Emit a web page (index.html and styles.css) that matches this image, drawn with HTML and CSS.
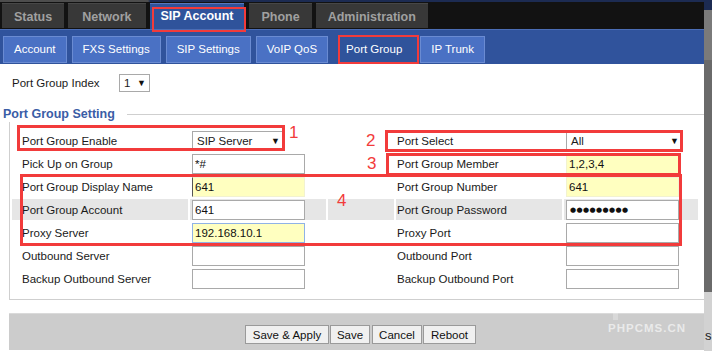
FILE: index.html
```html
<!DOCTYPE html>
<html lang="en">
<head>
    <meta charset="UTF-8">
    <title>Port Group</title>
    <link rel="stylesheet" href="styles.css">
</head>
<body>
<div class="screen">
    <div class="page">
        <div class="topstrip"></div>
        <nav class="mainnav">
            <span class="tab">Status</span>
            <span class="tab tab-wide">Network</span>
            <span class="tab active">SIP Account</span>
            <span class="tab">Phone</span>
            <span class="tab">Administration</span>
        </nav>
        <div class="subnav">
            <span class="subtab">Account</span>
            <span class="subtab">FXS Settings</span>
            <span class="subtab">SIP Settings</span>
            <span class="subtab">VoIP QoS</span>
            <span class="subtab active">Port Group</span>
            <span class="subtab">IP Trunk</span>
        </div>

        <div class="content">
            <div class="index-row">
                <span class="index-label">Port Group Index</span>
                <div class="select select-index"><span>1</span><span class="arrow">&#9660;</span></div>
            </div>

            <div class="legend-row">
                <span class="legend">Port Group Setting</span>
                <span class="legend-line"></span>
            </div>

            <div class="fieldbox">
                <div class="grid">
                    <div class="cell lab1">Port Group Enable</div>
                    <div class="cell"><div class="select select-enable"><span>SIP Server</span><span class="arrow">&#9660;</span></div></div>
                    <div class="cell"></div>
                    <div class="cell lab2">Port Select</div>
                    <div class="cell"><div class="select select-port"><span>All</span><span class="arrow">&#9660;</span></div></div>

                    <div class="cell lab1">Pick Up on Group</div>
                    <div class="cell"><input class="field" value="*#"></div>
                    <div class="cell"></div>
                    <div class="cell lab2">Port Group Member</div>
                    <div class="cell"><input class="field field-yellow" value="1,2,3,4"></div>

                    <div class="cell lab1">Port Group Display Name</div>
                    <div class="cell"><input class="field field-yellow field-caret" value="641"></div>
                    <div class="cell"></div>
                    <div class="cell lab2">Port Group Number</div>
                    <div class="cell"><input class="field field-yellow" value="641"></div>

                    <div class="cell shade lab1">Port Group Account</div>
                    <div class="cell shade"><input class="field" value="641"></div>
                    <div class="cell shade"></div>
                    <div class="cell shade lab2">Port Group Password</div>
                    <div class="cell shade"><div class="field dots">&#9679;&#9679;&#9679;&#9679;&#9679;&#9679;&#9679;&#9679;&#9679;</div></div>

                    <div class="cell lab1">Proxy Server</div>
                    <div class="cell"><input class="field field-yellow field-focus" value="192.168.10.1"></div>
                    <div class="cell"></div>
                    <div class="cell lab2">Proxy Port</div>
                    <div class="cell"><input class="field" value=""></div>

                    <div class="cell lab1">Outbound Server</div>
                    <div class="cell"><input class="field" value=""></div>
                    <div class="cell"></div>
                    <div class="cell lab2">Outbound Port</div>
                    <div class="cell"><input class="field" value=""></div>

                    <div class="cell lab1">Backup Outbound Server</div>
                    <div class="cell"><input class="field" value=""></div>
                    <div class="cell"></div>
                    <div class="cell lab2">Backup Outbound Port</div>
                    <div class="cell"><input class="field" value=""></div>
                </div>
            </div>

            <div class="actions">
                <button class="btn btn-apply">Save &amp; Apply</button>
                <button class="btn btn-save">Save</button>
                <button class="btn btn-cancel">Cancel</button>
                <button class="btn btn-reboot">Reboot</button>
                <span class="watermark-logo"></span>
                <span class="watermark">PHPCMS.CN</span>
            </div>
        </div>

        <!-- red marks drawn over the screenshot -->
        <div class="mark mark-tab"></div>
        <div class="mark mark-subtab"></div>
        <div class="mark mark-1"></div>
        <div class="mark mark-2"></div>
        <div class="mark mark-3"></div>
        <div class="mark mark-4"></div>
        <span class="num num-1">1</span>
        <span class="num num-2">2</span>
        <span class="num num-3">3</span>
        <span class="num num-4">4</span>
    </div>
    <div class="side">
        <div class="side-top"></div>
        <div class="side-light"></div>
        <div class="side-mid"></div>
        <div class="side-low">s</div>
    </div>
</div>
</body>
</html>
```

FILE: styles.css
```css
body {
    margin: 0;
    font-family: "Liberation Sans", Arial, sans-serif;
    font-size: 11.5px;
    color: #1a1a1a;
    background-color: #6a6a6a;
}

.screen {
    display: flex;
    width: 712px;
    height: 351px;
    overflow: hidden;
    position: relative;
}

.page {
    width: 704px;
    flex: none;
    background-color: white;
}

.topstrip {
    height: 2px;
    background: linear-gradient(to right, #4d4d4d 0, #4d4d4d 148px, #1c2b52 150px, #1c2b52 100%);
}

/* main tabs */
.mainnav {
    height: 27px;
    background-color: #121212;
    display: flex;
    align-items: flex-start;
    gap: 4px;
    padding-left: 2px;
    box-sizing: border-box;
}

.tab {
    margin-top: 1px;
    height: 25px;
    line-height: 27px;
    padding: 0 12px;
    background-color: #383838;
    border-top: 1px solid #474747;
    box-sizing: border-box;
    color: #a0a0a0;
    font-weight: bold;
    font-size: 12.5px;
}

.tab-wide {
    padding: 0 14px;
}

.tab.active {
    height: 26px;
    line-height: 24px;
    padding: 0 11px;
    margin-right: 1px;
    background-color: #2f539b;
    border-top: 1px solid #5777bd;
    color: white;
}

/* sub tabs */
.subnav {
    height: 35px;
    background-color: #30539c;
    border-top: 1px solid #4b6db5;
    box-sizing: border-box;
    display: flex;
    align-items: flex-start;
    gap: 5px;
    padding: 6px 0 0 3px;
}

.subtab {
    height: 27px;
    line-height: 25px;
    padding: 0 10px;
    background-color: #4a71c4;
    border: 1px solid #6a8bd2;
    box-sizing: border-box;
    color: white;
    font-size: 11.5px;
}

.subtab.active {
    background-color: #2f539b;
    border-color: #2f539b;
    margin: 0 2px;
}

/* content */
.content {
    padding-top: 10px;
}

.index-row {
    display: flex;
    align-items: center;
    height: 18px;
    padding-left: 12px;
}

.index-label {
    width: 107px;
}

.select {
    display: flex;
    justify-content: space-between;
    align-items: center;
    box-sizing: border-box;
    background-color: white;
    border: 1px solid #a9a9a9;
    padding: 0 3px 0 4px;
    font-size: 11.5px;
}

.select .arrow {
    font-size: 9px;
    color: #111;
}

.select-index {
    width: 31px;
    height: 18px;
}

.select-enable {
    width: 92px;
    height: 19px;
    margin-left: 2px;
}

.select-port {
    width: 117px;
    height: 18px;
    margin-left: 2px;
}

.legend-row {
    display: flex;
    align-items: center;
    height: 16px;
    margin-top: 14px;
    padding-left: 3px;
}

.legend {
    color: #3a5da6;
    font-weight: bold;
    font-size: 12.5px;
}

.legend-line {
    flex: 1;
    margin-left: 12px;
    border-top: 1px solid #cfcfcf;
    margin-top: 1px;
}

.fieldbox {
    margin-left: 9px;
    border-left: 1px solid #cfcfcf;
    border-bottom: 1px solid #cfcfcf;
    padding: 8px 0 10px 2px;
}

.grid {
    display: grid;
    grid-template-columns: 176px 136px 66px 166px 134px;
    grid-auto-rows: 21px;
    gap: 2px;
}

.cell {
    display: flex;
    align-items: center;
    box-sizing: border-box;
}

.lab1 {
    padding-left: 10px;
}

.lab2 {
    padding-left: 1px;
}

.shade {
    background-color: #e6e6e6;
}

.field {
    width: 113px;
    height: 20px;
    margin: 0 0 0 2px;
    box-sizing: border-box;
    border: 1px solid #a9a9a9;
    padding: 0 2px;
    font-family: "Liberation Sans", Arial, sans-serif;
    font-size: 11.5px;
    color: #111;
    background-color: white;
    outline: none;
}

.field-yellow {
    background-color: #ffffc0;
    border-color: #f2f2d0;
}

.field-caret {
    border-left-color: #555;
}

.field-focus {
    border-color: #8fb2e6;
}

.dots {
    display: flex;
    align-items: center;
    font-family: "DejaVu Sans", sans-serif;
    font-size: 7px;
    letter-spacing: 0.4px;
    padding-left: 3px;
}

/* bottom bar */
.actions {
    position: relative;
    margin: 13px 0 0 9px;
    height: 37px;
    background-color: #cccccc;
    border-top: 1px solid #dadada;
    box-sizing: border-box;
    display: flex;
    align-items: flex-start;
    padding: 11px 0 0 236px;
}

.btn {
    height: 19px;
    padding: 0;
    background-color: #f0f0f0;
    border: 1px solid #9a9a9a;
    font-family: "Liberation Sans", Arial, sans-serif;
    font-size: 11.5px;
    color: #111;
}

.btn-apply { width: 84px; }
.btn-save { width: 40px; margin-left: 1px; }
.btn-cancel { width: 50px; margin-left: 2px; }
.btn-reboot { width: 53px; margin-left: 1px; }

.watermark {
    position: absolute;
    left: 599px;
    top: 8px;
    color: rgba(255, 255, 255, 0.6);
    font-weight: bold;
    font-size: 11.5px;
    letter-spacing: 1px;
}

.watermark-logo {
    position: absolute;
    left: 604px;
    top: -14px;
    width: 60px;
    height: 20px;
    border-top: 5px solid rgba(255, 255, 255, 0.25);
    border-left: 5px solid rgba(255, 255, 255, 0.25);
    box-sizing: border-box;
}

/* red annotation marks */
.mark {
    position: absolute;
    border: 3px solid #f23b3b;
    box-sizing: border-box;
}

.mark-tab { left: 152px; top: 7px; width: 94px; height: 25px; border-width: 2px; }
.mark-subtab { left: 338px; top: 35px; width: 81px; height: 29px; border-width: 2px; }
.mark-1 { left: 17px; top: 125px; width: 268px; height: 26px; }
.mark-2 { left: 385px; top: 130px; width: 298px; height: 22px; }
.mark-3 { left: 386px; top: 153px; width: 295px; height: 23px; }
.mark-4 { left: 20px; top: 174px; width: 662px; height: 72px; }

.num {
    position: absolute;
    color: #f23b3b;
    font-size: 17px;
    line-height: 17px;
}

.num-1 { left: 289px; top: 124px; }
.num-2 { left: 366px; top: 132px; }
.num-3 { left: 367px; top: 155px; }
.num-4 { left: 337px; top: 192px; }

/* strip of the window behind */
.side {
    width: 8px;
    flex: none;
    display: flex;
    flex-direction: column;
}

.side-top {
    height: 10px;
    background-color: #1c2b52;
}

.side-light {
    height: 50px;
    background-color: #7a7a7a;
}

.side-mid {
    height: 232px;
    background-color: #6a6a6a;
}

.side-low {
    flex: 1;
    background-color: #d2d2d2;
    color: #222;
    font-size: 13px;
    padding-top: 36px;
    padding-left: 1px;
}
```
